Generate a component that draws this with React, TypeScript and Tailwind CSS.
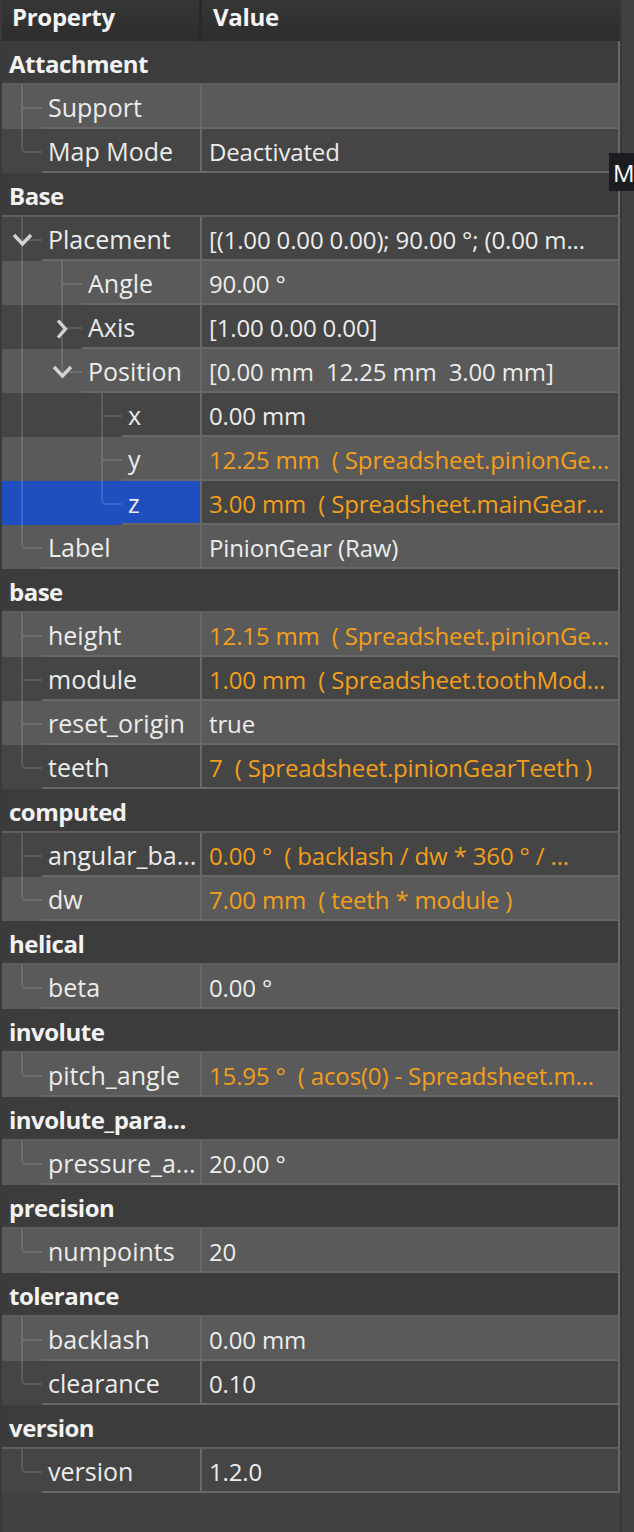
import React from 'react';

type GuideType = 'line' | 'none' | 'tee' | 'corner';

type Row =
  | { kind: 'group'; name: string }
  | {
      kind: 'prop';
      name: string;
      value: string;
      level: number;
      anc?: ('line' | 'none')[];
      last?: boolean;
      orange?: boolean;
      chevron?: 'down' | 'right';
      selected?: boolean;
    };

const rows: Row[] = [
  { kind: 'group', name: 'Attachment' },
  { kind: 'prop', name: 'Support', value: '', level: 1 },
  { kind: 'prop', name: 'Map Mode', value: 'Deactivated', level: 1, last: true },
  { kind: 'group', name: 'Base' },
  { kind: 'prop', name: 'Placement', value: '[(1.00 0.00 0.00); 90.00 °; (0.00 m...', level: 1, chevron: 'down' },
  { kind: 'prop', name: 'Angle', value: '90.00 °', level: 2, anc: ['line'] },
  { kind: 'prop', name: 'Axis', value: '[1.00 0.00 0.00]', level: 2, anc: ['line'], chevron: 'right' },
  { kind: 'prop', name: 'Position', value: '[0.00 mm  12.25 mm  3.00 mm]', level: 2, anc: ['line'], last: true, chevron: 'down' },
  { kind: 'prop', name: 'x', value: '0.00 mm', level: 3, anc: ['line', 'none'] },
  { kind: 'prop', name: 'y', value: '12.25 mm  ( Spreadsheet.pinionGe...', level: 3, anc: ['line', 'none'], orange: true },
  { kind: 'prop', name: 'z', value: '3.00 mm  ( Spreadsheet.mainGear...', level: 3, anc: ['line', 'none'], orange: true, last: true, selected: true },
  { kind: 'prop', name: 'Label', value: 'PinionGear (Raw)', level: 1, last: true },
  { kind: 'group', name: 'base' },
  { kind: 'prop', name: 'height', value: '12.15 mm  ( Spreadsheet.pinionGe...', level: 1, orange: true },
  { kind: 'prop', name: 'module', value: '1.00 mm  ( Spreadsheet.toothMod...', level: 1, orange: true },
  { kind: 'prop', name: 'reset_origin', value: 'true', level: 1 },
  { kind: 'prop', name: 'teeth', value: '7  ( Spreadsheet.pinionGearTeeth )', level: 1, orange: true, last: true },
  { kind: 'group', name: 'computed' },
  { kind: 'prop', name: 'angular_ba...', value: '0.00 °  ( backlash / dw * 360 ° / ...', level: 1, orange: true },
  { kind: 'prop', name: 'dw', value: '7.00 mm  ( teeth * module )', level: 1, orange: true, last: true },
  { kind: 'group', name: 'helical' },
  { kind: 'prop', name: 'beta', value: '0.00 °', level: 1, last: true },
  { kind: 'group', name: 'involute' },
  { kind: 'prop', name: 'pitch_angle', value: '15.95 °  ( acos(0) - Spreadsheet.m...', level: 1, orange: true, last: true },
  { kind: 'group', name: 'involute_para...' },
  { kind: 'prop', name: 'pressure_a...', value: '20.00 °', level: 1, last: true },
  { kind: 'group', name: 'precision' },
  { kind: 'prop', name: 'numpoints', value: '20', level: 1, last: true },
  { kind: 'group', name: 'tolerance' },
  { kind: 'prop', name: 'backlash', value: '0.00 mm', level: 1 },
  { kind: 'prop', name: 'clearance', value: '0.10', level: 1, last: true },
  { kind: 'group', name: 'version' },
  { kind: 'prop', name: 'version', value: '1.2.0', level: 1, last: true },
];

const LINE = 'rgba(255,255,255,0.13)';

function Guide({ type, chevron }: { type: GuideType; chevron?: 'down' | 'right' }) {
  return (
    <svg width="40" height="44" viewBox="0 0 40 44" className="block shrink-0">
      {type === 'line' && <path d="M20 0V44" stroke={LINE} strokeWidth="2" fill="none" />}
      {type === 'tee' && <path d="M20 0V44M20 23H40" stroke={LINE} strokeWidth="2" fill="none" />}
      {type === 'corner' && <path d="M20 0V19Q20 23 24 23H40" stroke={LINE} strokeWidth="2" fill="none" />}
      {chevron === 'down' && (
        <path d="M12 18L20.5 27L29 18" stroke="#d2d2d2" strokeWidth="3.4" fill="none" />
      )}
      {chevron === 'right' && (
        <path d="M16 15.5L23.5 24L16 32.5" stroke="#d2d2d2" strokeWidth="3.4" fill="none" />
      )}
    </svg>
  );
}

export default function App() {
  let visual = 0;
  return (
    <div className="relative flex w-[634px] h-[1532px] bg-[#424242] font-['Open_Sans',sans-serif] text-[25px] overflow-hidden">
      <div className="w-[2px] shrink-0 bg-[#3a3a3a]" />
      <div className="flex flex-col w-[618px] shrink-0">
        <div className="flex h-[41px] shrink-0 bg-gradient-to-b from-[#363636] to-[#2d2d2d] text-[#f4f4f4] font-bold text-[24px] tracking-[-0.3px]">
          <div className="w-[200px] shrink-0 border-r-[3px] border-[#292929] pl-[10px] pb-[8px] flex items-center">
            Property
          </div>
          <div className="flex-1 pl-[11px] pb-[8px] flex items-center">Value</div>
        </div>
        {rows.map((r, i) => {
          visual++;
          if (r.kind === 'group') {
            return (
              <div
                key={i}
                className="flex h-[44px] shrink-0 items-center bg-[#3c3c3c] border-b-2 border-b-[#5e5e5e] border-r-2 border-r-[#686868] pl-[7px] pt-[3px] font-bold text-[24px] tracking-[-0.5px] text-[#f2f2f2] whitespace-nowrap"
              >
                {r.name}
              </div>
            );
          }
          const light = visual % 2 === 0;
          const bg = light ? 'bg-[#5a5a5a]' : 'bg-[#454545]';
          const guides: { t: GuideType; c?: 'down' | 'right' }[] = [];
          (r.anc || []).forEach((a) => guides.push({ t: a }));
          guides.push({ t: r.last ? 'corner' : 'tee', c: r.chevron });
          return (
            <div key={i} className={`flex h-[44px] shrink-0 ${bg}`}>
              <div
                className={`flex w-[200px] shrink-0 border-r-2 border-r-[#686868] ${
                  r.selected ? 'bg-[#1f4fbf]' : ''
                }`}
              >
                {guides.map((g, j) => (
                  <Guide key={j} type={g.t} chevron={g.c} />
                ))}
                <div className="flex-1 min-w-0 flex items-center border-b-2 border-b-[#686868] pl-[6px] pt-[3px] text-[#ececec] whitespace-nowrap overflow-hidden">
                  {r.name}
                </div>
              </div>
              <div
                className={`flex-1 min-w-0 flex items-center border-b-2 border-b-[#686868] border-r-2 border-r-[#686868] pl-[7px] pt-[3px] overflow-hidden text-[24px] tracking-[-0.15px] ${
                  r.orange ? 'text-[#f29f1c]' : 'text-[#ececec]'
                }`}
              >
                <span className="block min-w-0 whitespace-pre overflow-hidden text-ellipsis">{r.value}</span>
              </div>
            </div>
          );
        })}
      </div>
      <div className="flex-1 border-l-2 border-l-[#393939] bg-[#424242]" />
      <div className="absolute left-[609px] top-[153px] w-[30px] h-[38px] bg-[#1d1d21] text-white text-[24px] flex items-center pl-[4px] pt-[1px]">
        M
      </div>
    </div>
  );
}
